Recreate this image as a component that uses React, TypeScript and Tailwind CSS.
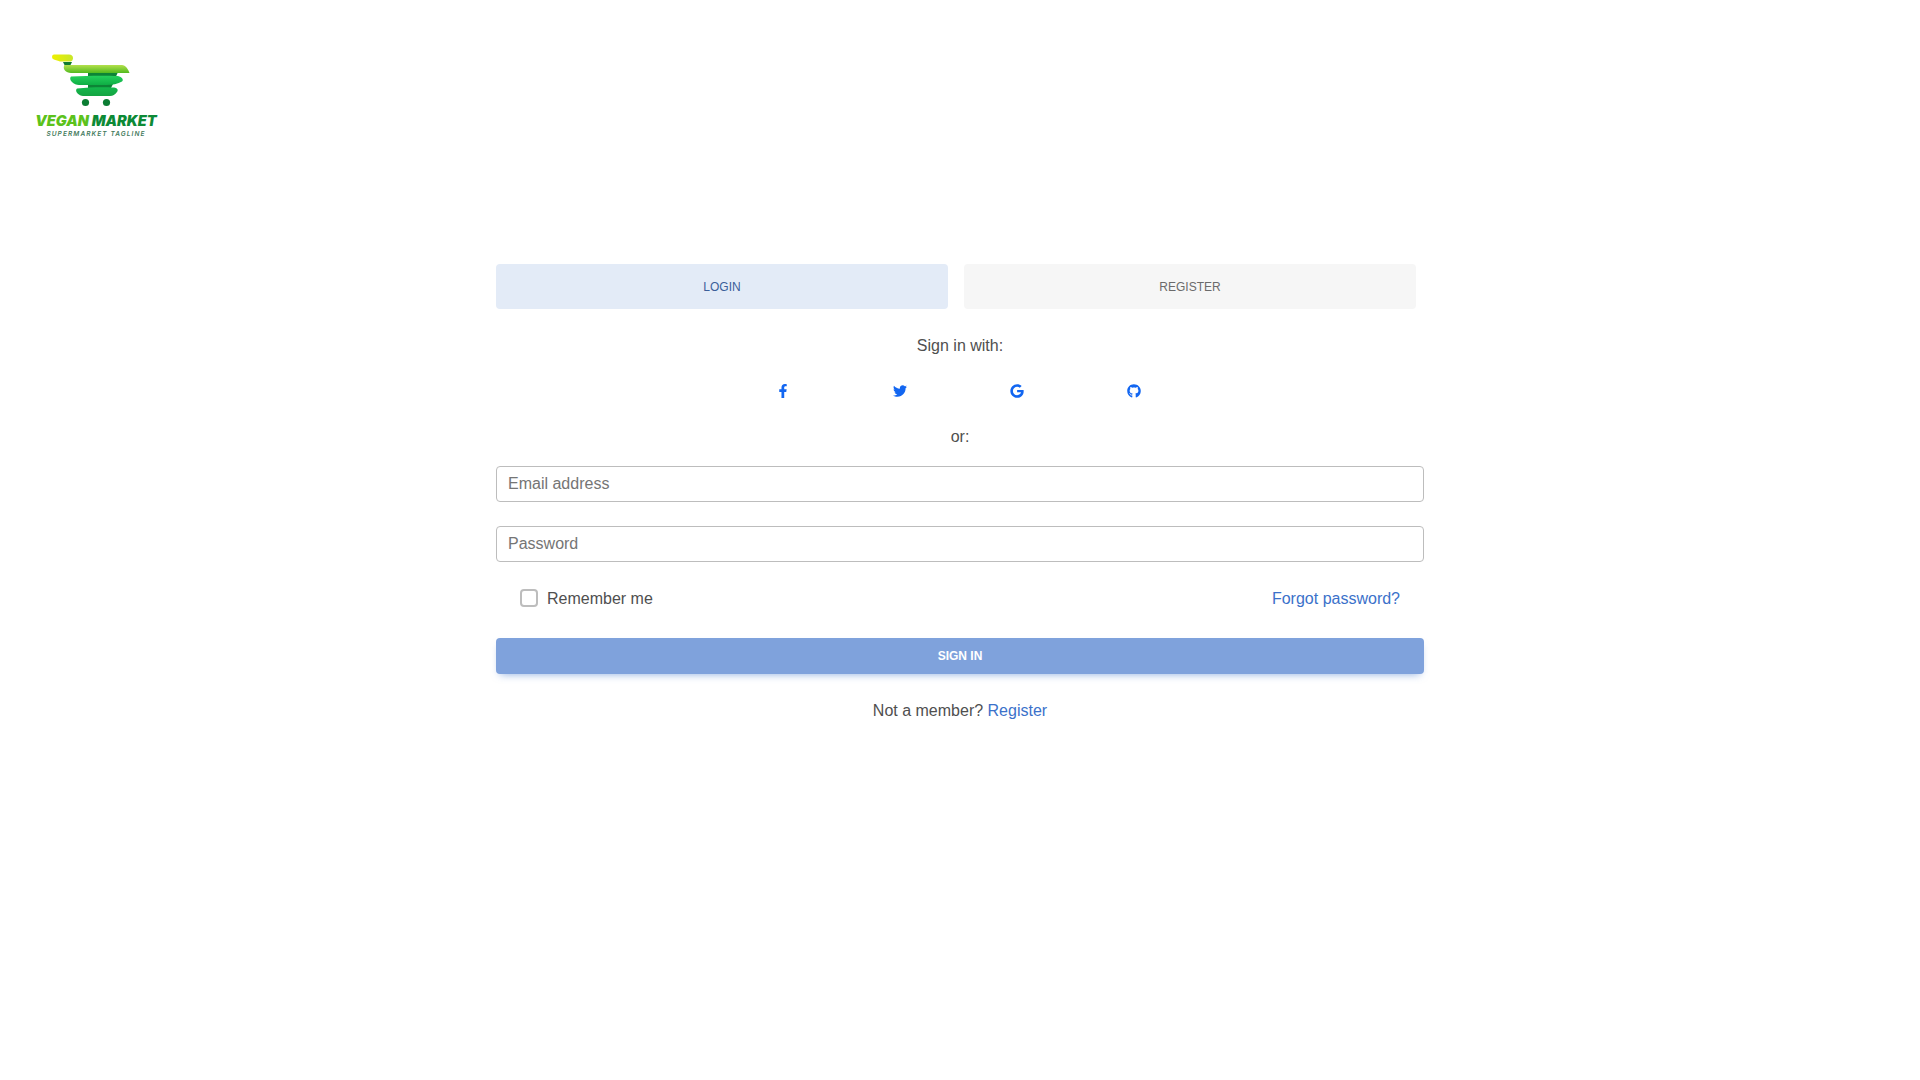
import { FaFacebookF, FaGithub, FaGoogle, FaTwitter } from "react-icons/fa";

const socials = [FaFacebookF, FaTwitter, FaGoogle, FaGithub];

function CartLogo() {
  return (
    <svg viewBox="50 52 84 56" className="block h-[56px] w-[84px]">
      <defs>
        <linearGradient id="handle" x1="0" x2="1" y1="0" y2="0">
          <stop offset="0" stopColor="#eef000" />
          <stop offset="1" stopColor="#c8e62a" />
        </linearGradient>
        <linearGradient id="basket1" x1="0" x2="0" y1="0" y2="1">
          <stop offset="0" stopColor="#b4e04c" />
          <stop offset="1" stopColor="#52ba1e" />
        </linearGradient>
        <linearGradient id="basket2" x1="0" x2="0" y1="0" y2="1">
          <stop offset="0" stopColor="#25d05c" />
          <stop offset="1" stopColor="#0eae44" />
        </linearGradient>
        <linearGradient id="basket3" x1="0" x2="0" y1="0" y2="1">
          <stop offset="0" stopColor="#14b84c" />
          <stop offset="1" stopColor="#14a442" />
        </linearGradient>
      </defs>
      <path d="M63 62 H72 L70 66 H65 Z" fill="#0f7a2e" />
      <path d="M54 54.5 H69 C71.5 54.5 73 56 73 58 C73 59 72.5 61.5 70 61.5 H60 C57 60 55 60.5 53 59 C51.5 57.5 52 54.5 54 54.5 Z" fill="url(#handle)" />
      <path d="M88 72 H118 L116 76.5 H88 Z" fill="#0d8436" />
      <path d="M88 84 H113 L111 88 H88 Z" fill="#0d8436" />
      <path d="M64.5 65 H122 C125.5 65 128 69 129.5 73 H71 C66 73 62 69 64.5 65 Z" fill="url(#basket1)" />
      <path d="M71 76.5 C88 75.5 106 75.5 118 76 C122 77 124 80 122 81.5 C118 84 112 85 106 85 H79 C74 85 68 80 71 76.5 Z" fill="url(#basket2)" />
      <path d="M77 88.5 C90 87 105 87 114 87.5 C117.5 88 118.5 90 117 92 C115 94.5 113 96 110 96 H83 C79 96 74 91 77 88.5 Z" fill="url(#basket3)" />
      <circle cx="85.5" cy="102.5" r="3.6" fill="#0b7d33" />
      <circle cx="106.5" cy="102.5" r="3.6" fill="#0b7d33" />
    </svg>
  );
}

export default function App() {
  return (
    <div className="min-h-screen bg-white font-['Liberation_Sans',Arial,sans-serif] text-base text-[#4f4f4f]">
      <header className="pl-[35px] pt-[52px]">
        <div className="flex w-[122px] flex-col items-center">
          <div className="self-start pl-[15px]">
            <CartLogo />
          </div>
          <div className="mt-[6px] whitespace-nowrap font-['Inter',sans-serif] text-[14.5px] leading-[14px] font-black italic">
            <span className="text-[#5cc21c]">VEGAN </span>
            <span className="text-[#0d8a36]">MARKET</span>
          </div>
          <div className="mt-[2px] whitespace-nowrap font-['Inter',sans-serif] text-[6.5px] leading-[8px] font-semibold tracking-[1.1px] text-[#3f7a5c] italic">
            SUPERMARKET TAGLINE
          </div>
        </div>
      </header>

      <main className="mx-auto mt-[126px] w-[928px]">
        <div className="mb-[25px] flex w-[920px] gap-4">
          <a className="flex h-[45px] flex-1 items-center justify-center rounded bg-[#e3ebf7] text-xs font-medium text-[#3b5f9a] uppercase">
            Login
          </a>
          <a className="flex h-[45px] flex-1 items-center justify-center rounded bg-[#f6f6f6] text-xs font-medium text-[#6b6b6b] uppercase">
            Register
          </a>
        </div>

        <form>
          <p className="mb-[15px] text-center">Sign in with:</p>
          <div className="mr-[4px] flex h-9 items-center justify-center">
            {socials.map((Icon, i) => (
              <button key={i} type="button" className="flex h-9 items-center px-[51.5px] text-[#1266f1]">
                <Icon className="h-[14px] w-auto" />
              </button>
            ))}
          </div>
          <p className="mt-4 mb-[17px] text-center">or:</p>

          <input
            type="email"
            placeholder="Email address"
            className="mb-[24px] block h-9 w-full rounded border border-[#bdbdbd] px-[11px] text-base text-[#4f4f4f] outline-none placeholder:text-[#757575]"
          />
          <input
            type="password"
            placeholder="Password"
            className="mb-[25px] block h-9 w-full rounded border border-[#bdbdbd] px-[11px] text-base text-[#4f4f4f] outline-none placeholder:text-[#757575]"
          />

          <div className="mb-[27px] flex h-6 items-center justify-between px-6">
            <label className="flex items-center gap-[9px]">
              <input
                type="checkbox"
                className="mb-[2px] h-[18px] w-[18px] appearance-none rounded border-2 border-[#bdbdbd] bg-white"
              />
              Remember me
            </label>
            <a className="text-[#3b71ca]">Forgot password?</a>
          </div>

          <button
            type="button"
            className="mb-[25px] block h-9 w-full rounded bg-[#7fa2dc] text-xs font-bold text-white uppercase shadow-[0_4px_9px_-4px_rgba(59,113,202,0.6)]"
          >
            Sign in
          </button>

          <p className="text-center">
            Not a member? <a className="text-[#3b71ca]">Register</a>
          </p>
        </form>
      </main>
    </div>
  );
}
